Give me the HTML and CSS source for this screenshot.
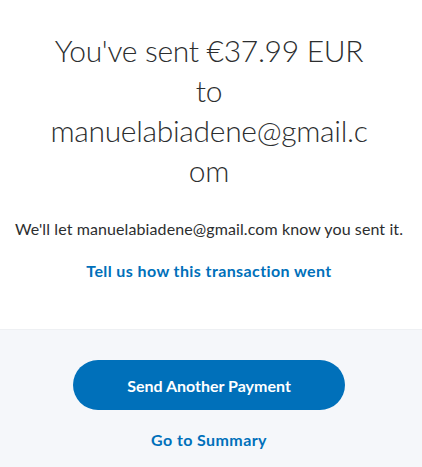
FILE: index.html
```html
<!DOCTYPE html>
<html lang="en">
<head>
<meta charset="utf-8">
<title>Payment sent</title>
<link rel="stylesheet" href="styles.css">
</head>
<body>
<main class="page">
  <section class="confirm">
    <h1 class="title">You've sent €37.99 EUR to manuelabiadene@gmail.com</h1>
    <p class="note">We'll let manuelabiadene@gmail.com know you sent it.</p>
    <a class="link" href="#">Tell us how this transaction went</a>
  </section>
  <section class="actions">
    <button class="btn-primary" type="button">Send Another Payment</button>
    <a class="link" href="#">Go to Summary</a>
  </section>
</main>
</body>
</html>
```

FILE: styles.css
```css
html, body {
  margin: 0;
  padding: 0;
  background: #ffffff;
}
body {
  font-family: Lato, "Open Sans", "Liberation Sans", sans-serif;
  color: #2c2e2f;
}
.page {
  display: flex;
  flex-direction: column;
  min-height: 467px;
}
.confirm {
  display: flex;
  flex-direction: column;
  align-items: center;
  padding: 30px 44px 48px 40px;
  text-align: center;
}
.title {
  margin: 0;
  width: 326px;
  font-size: 30px;
  font-weight: 300;
  letter-spacing: -0.3px;
  line-height: 40px;
  overflow-wrap: anywhere;
  color: #2c2e2f;
}
.note {
  margin: 29px -40px 0;
  font-size: 16px;
  line-height: 20px;
  letter-spacing: 0.1px;
}
.link {
  display: block;
  margin-top: 22px;
  font-size: 16px;
  line-height: 20px;
  font-weight: 700;
  letter-spacing: 0.4px;
  color: #0070ba;
  text-decoration: none;
}
.actions {
  flex: 1;
  display: flex;
  flex-direction: column;
  align-items: center;
  padding: 30px 4px 0 0;
  background: #f5f7fa;
  border-top: 1px solid #eef0f3;
}
.btn-primary {
  width: 272px;
  height: 50px;
  border: 0;
  border-radius: 25px;
  background: #0070ba;
  color: #ffffff;
  font-family: inherit;
  font-size: 16px;
  font-weight: 700;
}
.actions .link {
  margin-top: 20px;
}
```
